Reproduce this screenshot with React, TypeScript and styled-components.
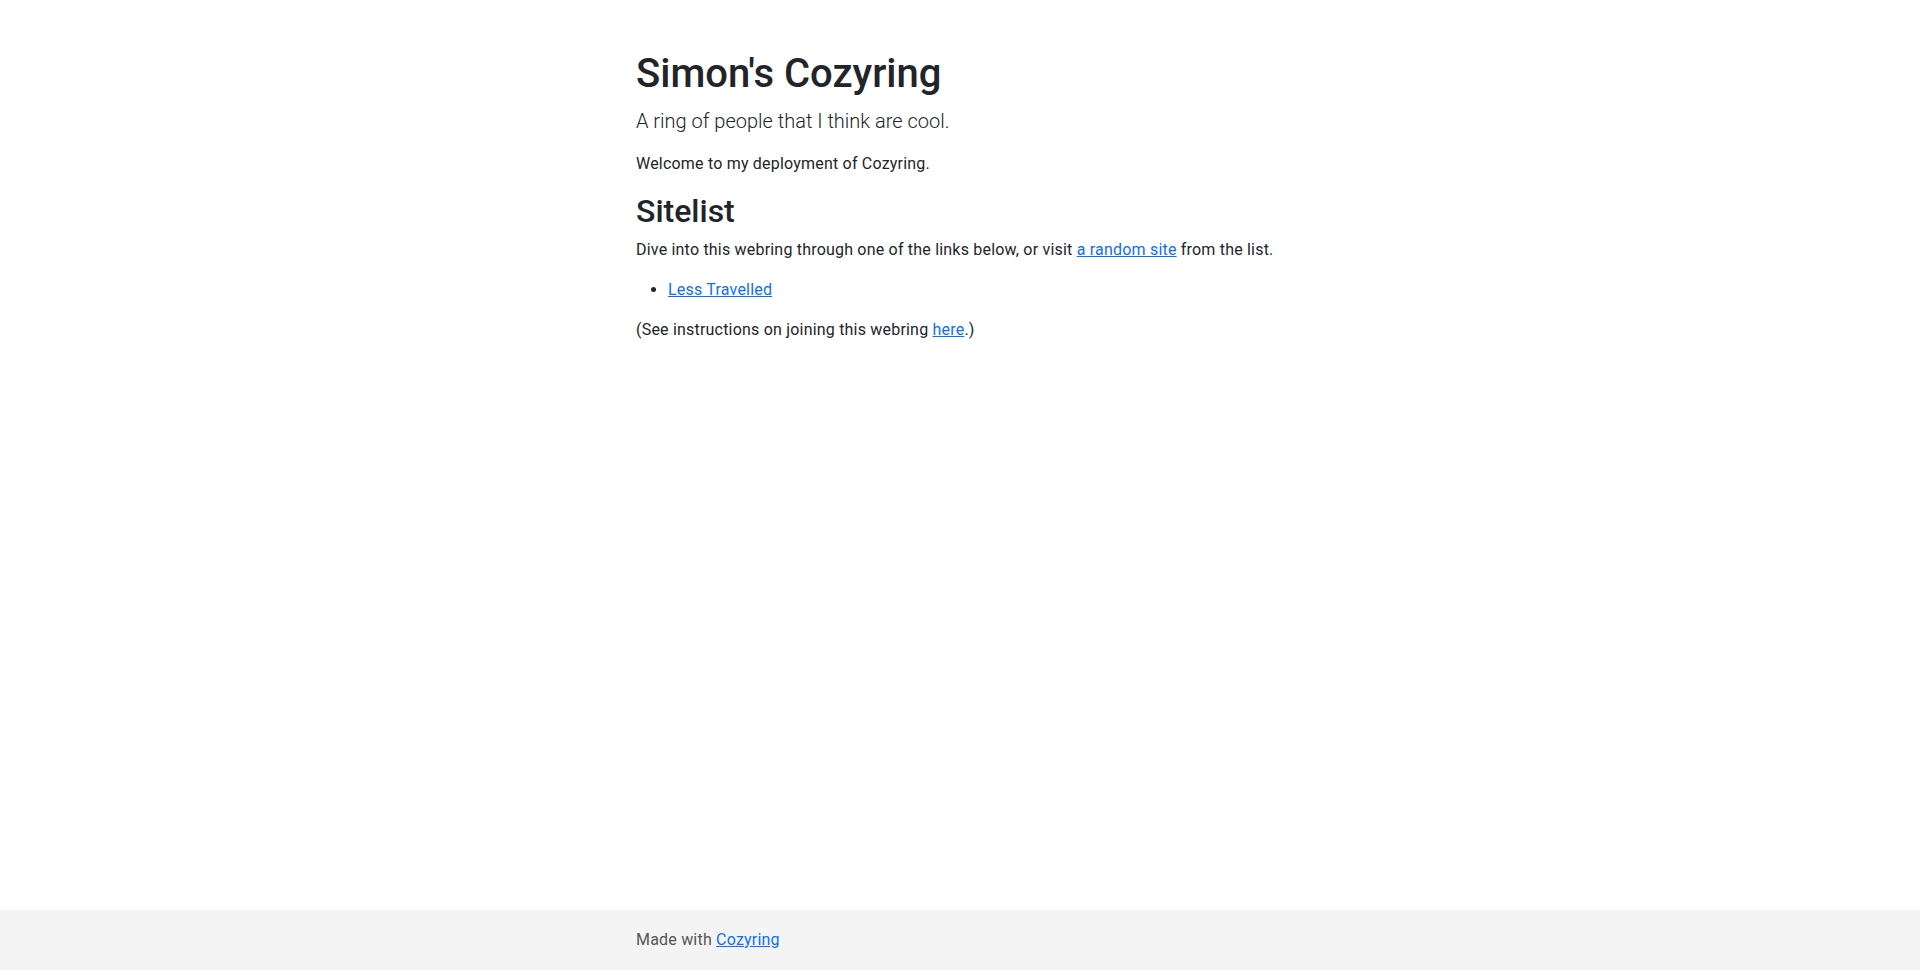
import styled, { createGlobalStyle } from "styled-components";

const Global = createGlobalStyle`
  html, body { margin: 0; padding: 0; height: 100%; }
  body {
    font-family: Roboto, "Noto Sans", "Liberation Sans", sans-serif;
    font-size: 16px;
    line-height: 1.5;
    color: #212529;
    background: #fff;
  }
`;

const Page = styled.div`
  min-height: 970px;
  display: flex;
  flex-direction: column;
`;

const Main = styled.main`
  flex: 1;
  width: 100%;
  max-width: 672px;
  margin: 0 auto;
  padding: 50px 12px 0;
  box-sizing: border-box;
`;

const Title = styled.h1`
  margin: 0 0 8px;
  font-size: 40px;
  font-weight: 500;
  line-height: 1.2;
`;

const Lead = styled.p`
  margin: 0 0 16px;
  font-size: 20px;
  font-weight: 300;
`;

const Text = styled.p`
  margin: 0 0 16px;
  letter-spacing: 0.2px;
`;

const Heading = styled.h2`
  margin: 0 0 8px;
  font-size: 32px;
  font-weight: 500;
  line-height: 1.2;
`;

const List = styled.ul`
  margin: 0 0 16px;
  padding-left: 32px;
  letter-spacing: 0.2px;
`;

const Link = styled.a`
  color: #0d6efd;
  text-decoration: underline;
`;

const Footer = styled.footer`
  background: #f4f4f4;
  height: 60px;
  display: flex;
  align-items: center;
`;

const FooterInner = styled.div`
  width: 100%;
  max-width: 672px;
  margin: 0 auto;
  padding: 0 12px;
  box-sizing: border-box;
  color: #555;
  letter-spacing: 0.2px;
`;

export default function App() {
  return (
    <Page>
      <Global />
      <Main>
        <Title>Simon's Cozyring</Title>
        <Lead>A ring of people that I think are cool.</Lead>
        <Text>Welcome to my deployment of Cozyring.</Text>
        <Heading>Sitelist</Heading>
        <Text>
          Dive into this webring through one of the links below, or visit{" "}
          <Link href="#">a random site</Link> from the list.
        </Text>
        <List>
          <li>
            <Link href="#">Less Travelled</Link>
          </li>
        </List>
        <Text>
          (See instructions on joining this webring <Link href="#">here</Link>.)
        </Text>
      </Main>
      <Footer>
        <FooterInner>
          Made with <Link href="#">Cozyring</Link>
        </FooterInner>
      </Footer>
    </Page>
  );
}
